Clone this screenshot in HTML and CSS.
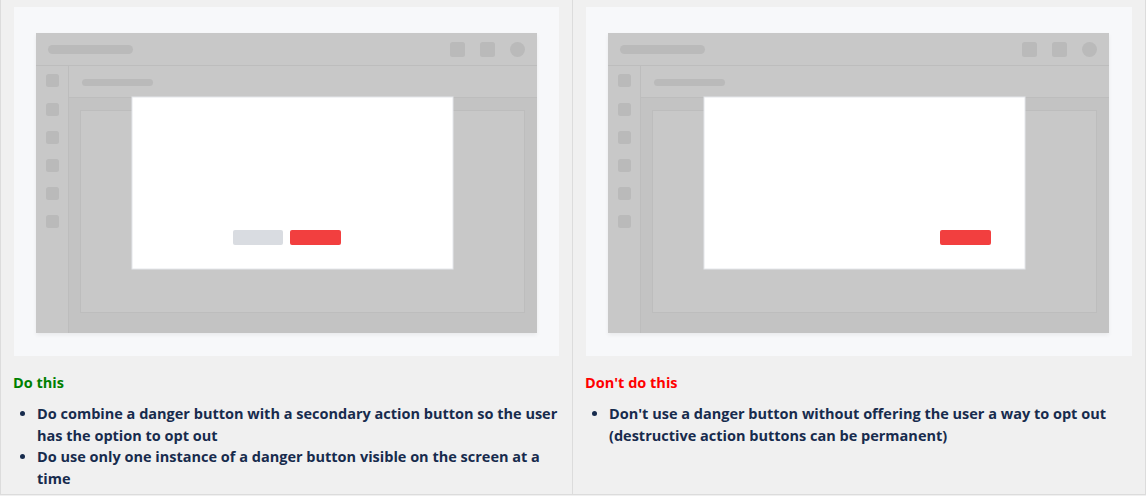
FILE: index.html
```html
<!DOCTYPE html>
<html>
<head>
<meta charset="utf-8">
<link rel="stylesheet" href="styles.css">
</head>
<body>
<div class="grid">
  <section class="col">
    <div class="panel">
      <svg class="wire" width="501" height="300" viewBox="0 0 501 300">
        <rect x="0" y="0" width="501" height="300" fill="#c8c8c8"/>
        <rect x="32" y="64" width="469" height="236" fill="#c3c3c3"/>
        <line x1="0" y1="32.5" x2="501" y2="32.5" stroke="#bdbdbd"/>
        <line x1="32.5" y1="32" x2="32.5" y2="300" stroke="#bdbdbd"/>
        <line x1="32" y1="64.5" x2="501" y2="64.5" stroke="#bdbdbd"/>
        <rect x="12" y="12" width="85" height="9" rx="4.5" fill="#bababa"/>
        <rect x="414" y="9" width="15" height="15" rx="2.5" fill="#bababa"/>
        <rect x="444" y="9" width="15" height="15" rx="2.5" fill="#bababa"/>
        <circle cx="481.5" cy="16.5" r="7.5" fill="#bababa"/>
        <rect x="46" y="46" width="71" height="7" rx="3.5" fill="#bababa"/>
        <rect x="10" y="41" width="13" height="13" rx="2.5" fill="#bababa"/>
        <rect x="10" y="70" width="13" height="13" rx="2.5" fill="#bababa"/>
        <rect x="10" y="98" width="13" height="13" rx="2.5" fill="#bababa"/>
        <rect x="10" y="126" width="13" height="13" rx="2.5" fill="#bababa"/>
        <rect x="10" y="154" width="13" height="13" rx="2.5" fill="#bababa"/>
        <rect x="10" y="182" width="13" height="13" rx="2.5" fill="#bababa"/>
        <rect x="44.5" y="77.5" width="444" height="202" fill="#c8c8c8" stroke="#bdbdbd"/>
        <rect x="96" y="64" width="321" height="172" fill="#ffffff" stroke="#e4e6ea" stroke-width="1"/>
        <rect x="197" y="197" width="50" height="15" rx="2" fill="#d9dce1"/>
        <rect x="254" y="197" width="51" height="15" rx="2" fill="#f23f3f"/>
      </svg>
    </div>
    <h3 class="head do">Do this</h3>
    <ul class="list">
      <li>Do combine a danger button with a secondary action button so the user has the option to opt out</li>
      <li>Do use only one instance of a danger button visible on the screen at a time</li>
    </ul>
  </section>
  <section class="col">
    <div class="panel">
      <svg class="wire" width="501" height="300" viewBox="0 0 501 300">
        <rect x="0" y="0" width="501" height="300" fill="#c8c8c8"/>
        <rect x="32" y="64" width="469" height="236" fill="#c3c3c3"/>
        <line x1="0" y1="32.5" x2="501" y2="32.5" stroke="#bdbdbd"/>
        <line x1="32.5" y1="32" x2="32.5" y2="300" stroke="#bdbdbd"/>
        <line x1="32" y1="64.5" x2="501" y2="64.5" stroke="#bdbdbd"/>
        <rect x="12" y="12" width="85" height="9" rx="4.5" fill="#bababa"/>
        <rect x="414" y="9" width="15" height="15" rx="2.5" fill="#bababa"/>
        <rect x="444" y="9" width="15" height="15" rx="2.5" fill="#bababa"/>
        <circle cx="481.5" cy="16.5" r="7.5" fill="#bababa"/>
        <rect x="46" y="46" width="71" height="7" rx="3.5" fill="#bababa"/>
        <rect x="10" y="41" width="13" height="13" rx="2.5" fill="#bababa"/>
        <rect x="10" y="70" width="13" height="13" rx="2.5" fill="#bababa"/>
        <rect x="10" y="98" width="13" height="13" rx="2.5" fill="#bababa"/>
        <rect x="10" y="126" width="13" height="13" rx="2.5" fill="#bababa"/>
        <rect x="10" y="154" width="13" height="13" rx="2.5" fill="#bababa"/>
        <rect x="10" y="182" width="13" height="13" rx="2.5" fill="#bababa"/>
        <rect x="44.5" y="77.5" width="444" height="202" fill="#c8c8c8" stroke="#bdbdbd"/>
        <rect x="96" y="64" width="321" height="172" fill="#ffffff" stroke="#e4e6ea" stroke-width="1"/>
        <rect x="332" y="197" width="51" height="15" rx="2" fill="#f23f3f"/>
      </svg>
    </div>
    <h3 class="head dont">Don't do this</h3>
    <ul class="list">
      <li>Don't use a danger button without offering the user a way to opt out (destructive action buttons can be permanent)</li>
    </ul>
  </section>
</div>
</body>
</html>
```
FILE: styles.css
```css
html, body {
  margin: 0;
  padding: 0;
  background: #f0f0f0;
}
body {
  font-family: "Open Sans", "Noto Sans", "Liberation Sans", sans-serif;
  color: #172b4d;
  width: 1146px;
  height: 496px;
  overflow: hidden;
}
.grid {
  display: grid;
  grid-template-columns: 572px 573px;
  border-left: 1px solid #dcdcdc;
  border-bottom: 1px solid #dcdcdc;
  height: 494px;
}
.col {
  border-right: 1px solid #dcdcdc;
  padding: 7px 13px 0 13px;
}
.panel {
  background: #f7f8fa;
  padding: 26px 21px 23px 22px;
  display: flex;
}
.wire {
  display: block;
  box-shadow: 0 2px 4px rgba(0, 0, 0, 0.06);
}
.head {
  margin: 17px 0 0 -1px;
  font-size: 14.5px;
  font-weight: 700;
  line-height: 20px;
}
.do { color: #008000; }
.dont { color: #ff0000; }
.list {
  margin: 10px 0 0 0;
  padding-left: 23px;
  font-size: 14.5px;
  font-weight: 700;
  line-height: 21.5px;
  color: #172b4d;
}
.list li { padding-left: 0; }
```
